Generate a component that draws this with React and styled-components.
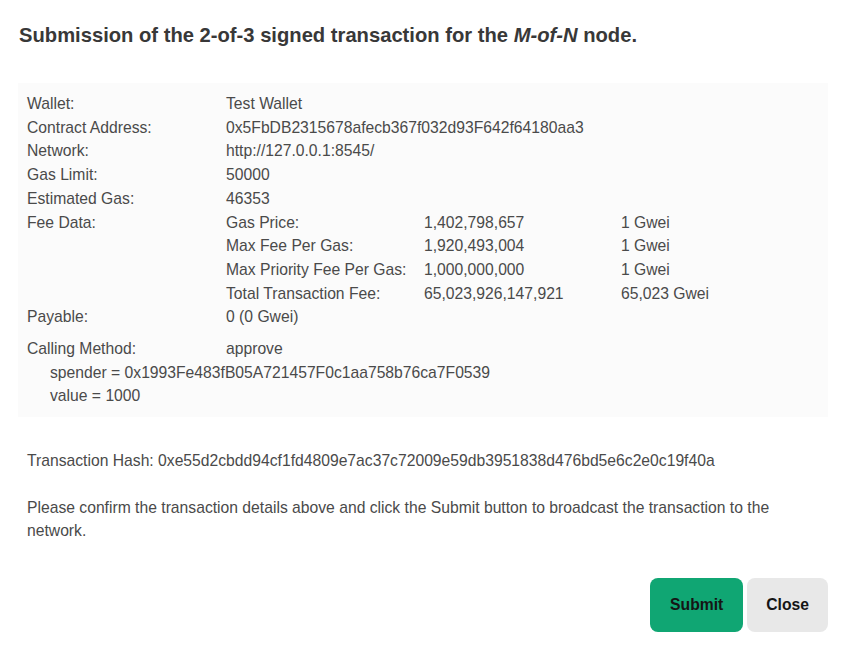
import React from 'react';
import styled, { createGlobalStyle } from 'styled-components';

const Global = createGlobalStyle`
  html, body {
    margin: 0;
    padding: 0;
    background: #ffffff;
  }
  body {
    font-family: "Liberation Sans", Arial, sans-serif;
    color: #444444;
  }
`;

const Styled = {
    page: styled.div`
        width: 848px;
        box-sizing: border-box;
        padding: 20px 20px 15px 18px;
    `,
    title: styled.h1`
        margin: 0 0 0 1px;
        font-size: 20.2px;
        font-weight: bold;
        color: #383838;
        line-height: 30px;
    `,
    panel: styled.div`
        margin-top: 33px;
        background: #fbfbfb;
        padding: 9px 9px 9px 9px;
        font-size: 15.7px;
        line-height: 23.7px;
        color: #4a4a4a;
    `,
    row: styled.div`
        display: grid;
        grid-template-columns: 199px 1fr;
        margin-top: ${props => props.gap || 0}px;
    `,
    fees: styled.div`
        display: grid;
        grid-template-columns: 198px 197px 1fr;
        white-space: nowrap;
    `,
    arg: styled.div`
        padding-left: 23px;
    `,
    text: styled.p`
        margin: ${props => props.top}px 0 0 0;
        padding-left: 9px;
        font-size: 15.7px;
        line-height: 23.4px;
        color: #4a4a4a;
    `,
    actions: styled.div`
        display: flex;
        justify-content: flex-end;
        gap: 4px;
        margin-top: 36px;
    `,
    button: styled.button`
        height: 54px;
        padding: 0 ${props => props.pad}px;
        border: none;
        border-radius: 8px;
        background: ${props => props.bg};
        color: #151515;
        font-family: "Liberation Sans", Arial, sans-serif;
        font-size: 15.7px;
        font-weight: bold;
        cursor: pointer;
    `
};

const details = [
    ['Wallet:', 'Test Wallet'],
    ['Contract Address:', '0x5FbDB2315678afecb367f032d93F642f64180aa3'],
    ['Network:', 'http://127.0.0.1:8545/'],
    ['Gas Limit:', '50000'],
    ['Estimated Gas:', '46353'],
];

const fees = [
    ['Gas Price:', '1,402,798,657', '1 Gwei'],
    ['Max Fee Per Gas:', '1,920,493,004', '1 Gwei'],
    ['Max Priority Fee Per Gas:', '1,000,000,000', '1 Gwei'],
    ['Total Transaction Fee:', '65,023,926,147,921', '65,023 Gwei'],
];

function App() {
    return (
        <React.Fragment>
            <Global />
            <Styled.page>
                <Styled.title>
                    Submission of the 2-of-3 signed transaction for the <i>M-of-N</i> node.
                </Styled.title>

                <Styled.panel>
                    {details.map(([label, value]) => (
                        <Styled.row key={label}>
                            <div>{label}</div>
                            <div>{value}</div>
                        </Styled.row>
                    ))}
                    <Styled.row>
                        <div>Fee Data:</div>
                        <div>
                            {fees.map(([name, wei, gwei]) => (
                                <Styled.fees key={name}>
                                    <div>{name}</div>
                                    <div>{wei}</div>
                                    <div>{gwei}</div>
                                </Styled.fees>
                            ))}
                        </div>
                    </Styled.row>
                    <Styled.row>
                        <div>Payable:</div>
                        <div>0 (0 Gwei)</div>
                    </Styled.row>
                    <Styled.row gap={8}>
                        <div>Calling Method:</div>
                        <div>approve</div>
                    </Styled.row>
                    <Styled.arg>spender = 0x1993Fe483fB05A721457F0c1aa758b76ca7F0539</Styled.arg>
                    <Styled.arg>value = 1000</Styled.arg>
                </Styled.panel>

                <Styled.text top={32}>
                    Transaction Hash: 0xe55d2cbdd94cf1fd4809e7ac37c72009e59db3951838d476bd5e6c2e0c19f40a
                </Styled.text>
                <Styled.text top={23}>
                    Please confirm the transaction details above and click the Submit button to broadcast the transaction to the network.
                </Styled.text>

                <Styled.actions>
                    <Styled.button bg="#10a673" pad={20}>Submit</Styled.button>
                    <Styled.button bg="#e8e8e8" pad={19}>Close</Styled.button>
                </Styled.actions>
            </Styled.page>
        </React.Fragment>
    );
}

export default App;
